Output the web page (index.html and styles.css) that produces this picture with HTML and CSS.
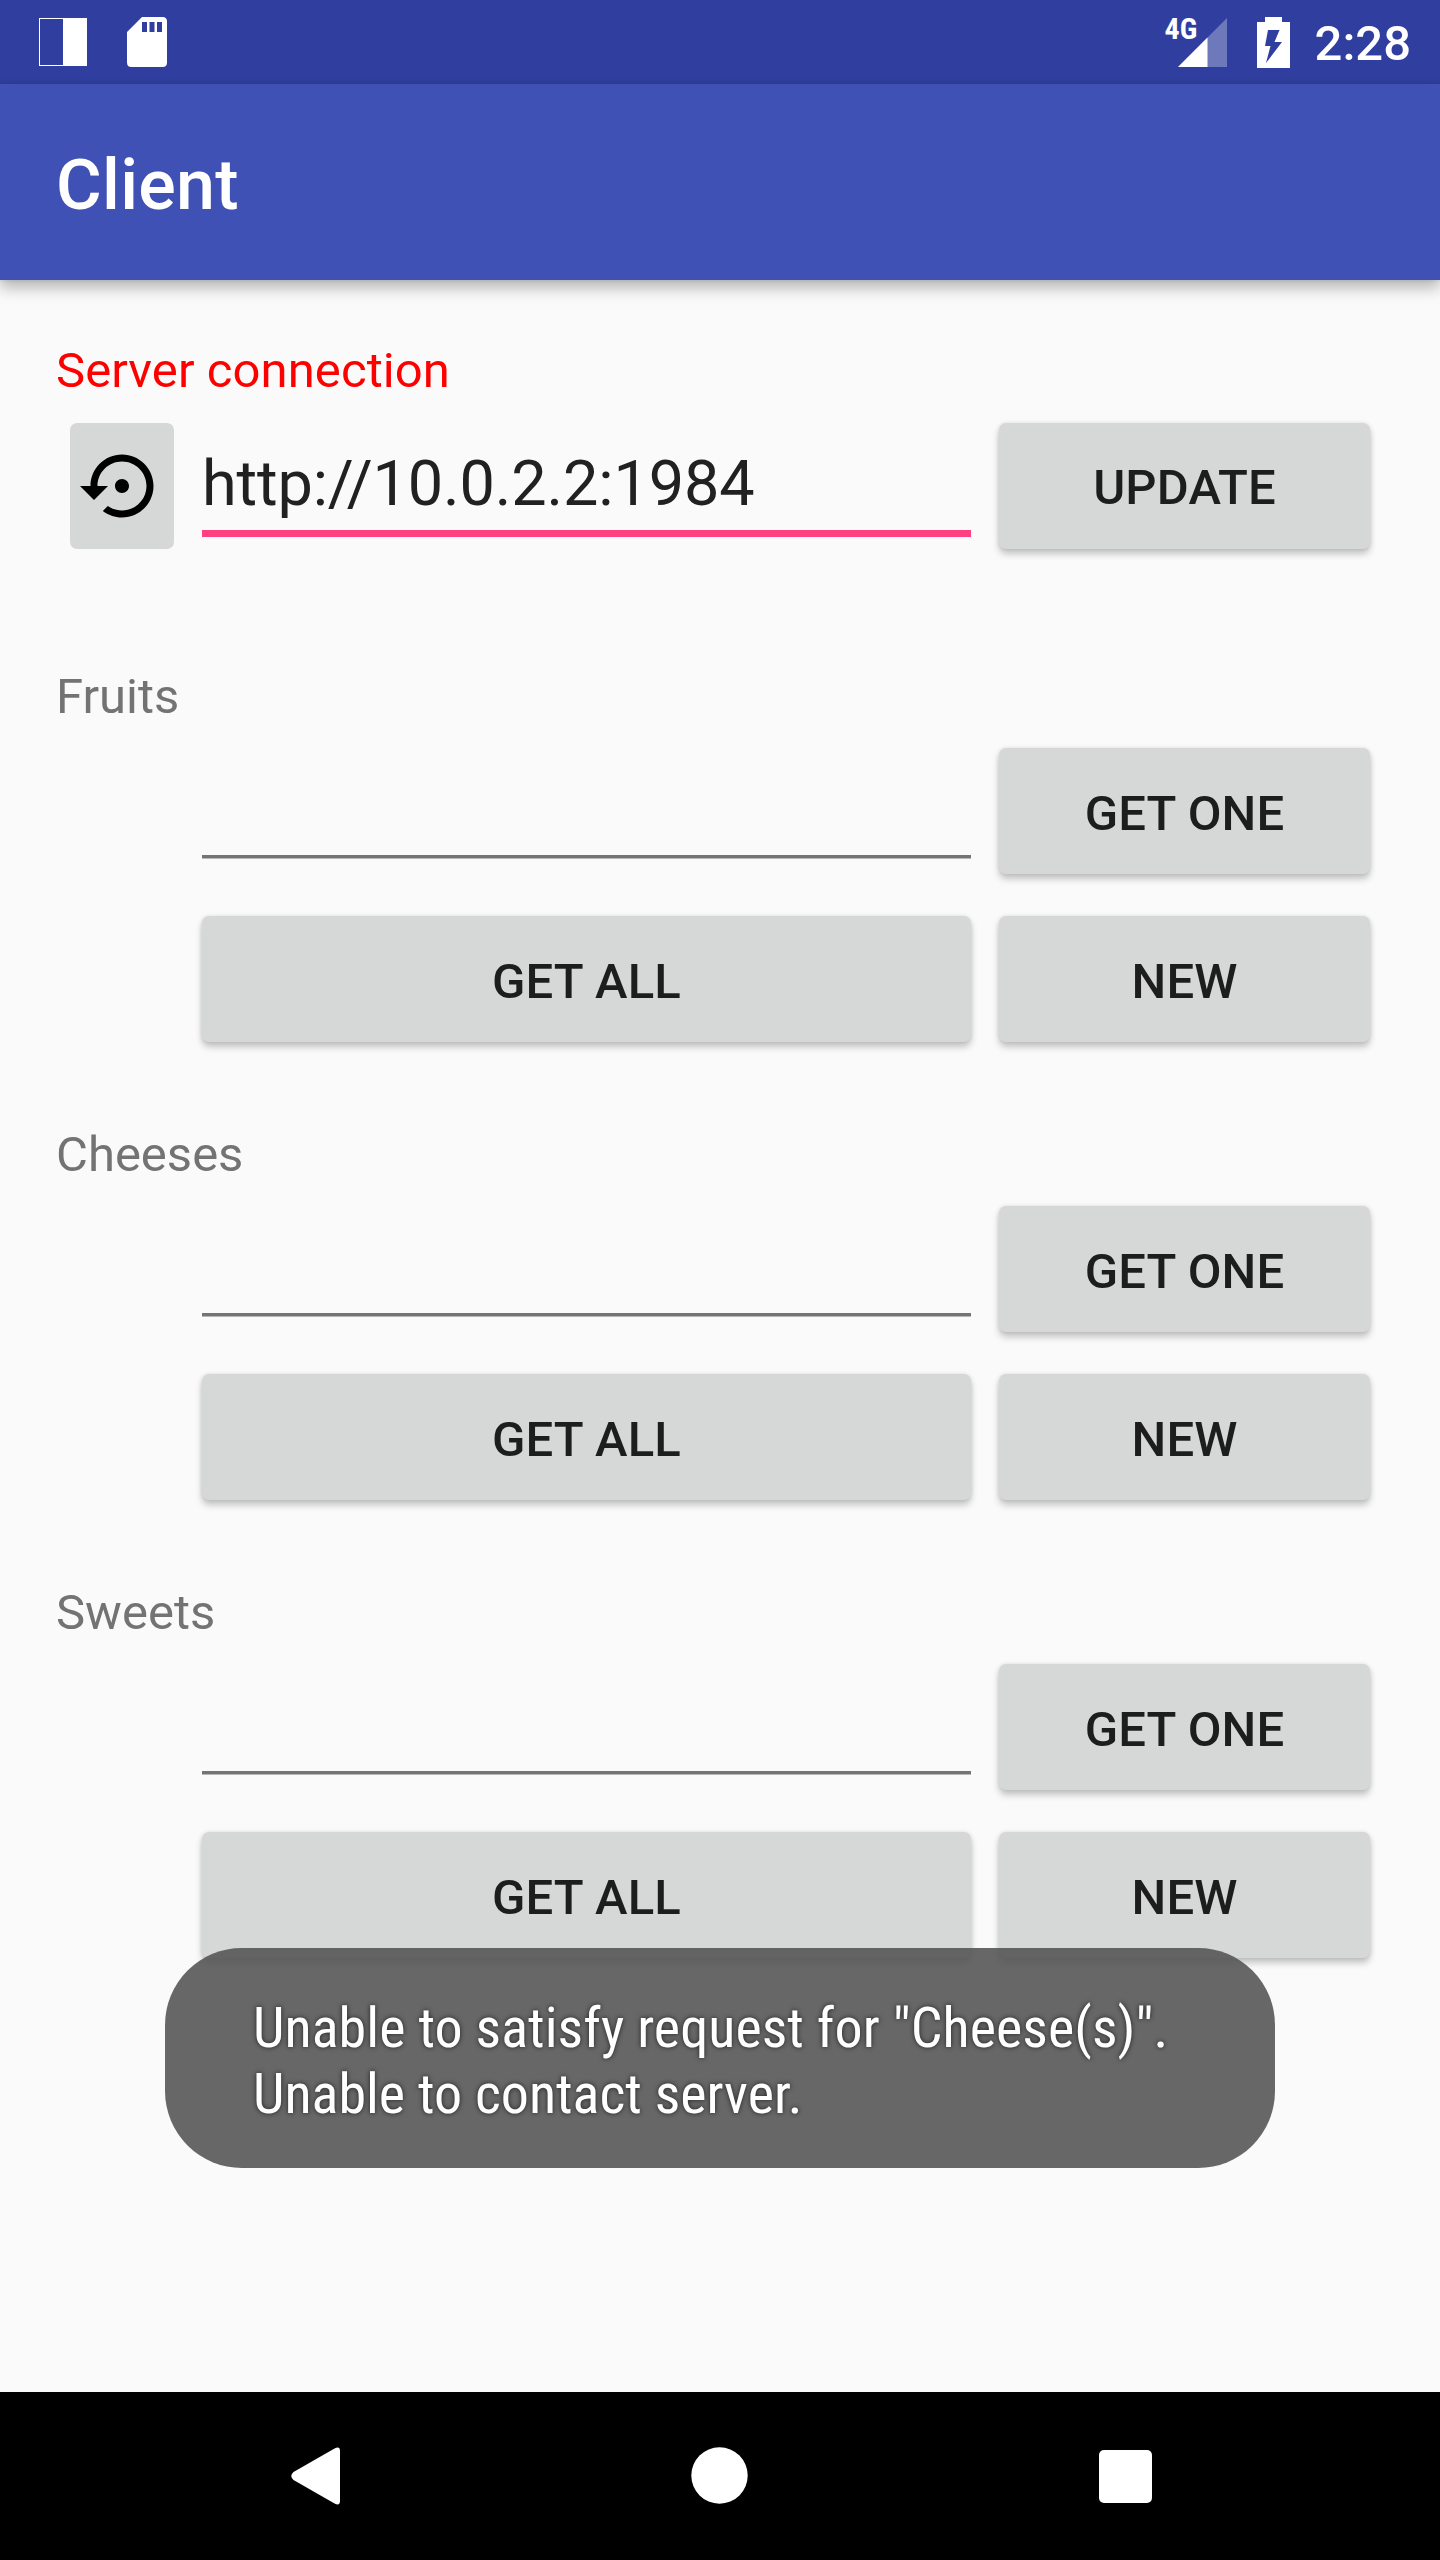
FILE: index.html
```html
<!DOCTYPE html>
<html lang="en">
<head>
<meta charset="utf-8">
<title>Client</title>
<link rel="stylesheet" href="styles.css">
</head>
<body>
<div class="screen">
  <header class="status-bar">
    <svg class="icon-contrast" width="48" height="48" viewBox="0 0 48 48"><rect x=".5" y=".5" width="47" height="47" fill="none" stroke="#fff"/><rect x="24" width="24" height="48" fill="#fff"/></svg>
    <svg class="icon-sd" width="40" height="50" viewBox="0 0 40 50"><path fill="#fff" fill-rule="evenodd" d="M15 0H35.500Q40 0 40 4.500V45.500Q40 50 35.500 50H4.500Q0 50 0 45.500V15ZM15 5V15H20V5ZM22.500 5V15H27.500V5ZM30 5V15H35V5Z"/></svg>
    <div class="status-right">
      <div class="signal">
        <svg width="49" height="49" viewBox="0 0 49 49"><path fill="#fff" fill-opacity=".3" d="M0 49L49 0V49Z"/><path fill="#fff" d="M0 49L29.500 19.500V49Z"/></svg>
        <span class="network">4G</span>
      </div>
      <svg class="icon-battery" width="33" height="51" viewBox="0 0 33 51"><path fill="#fff" fill-rule="evenodd" d="M8 0H25V5H33V51H0V5H8ZM11 13L8 29H13.500L9 46L25 25H17.500L22.500 13Z"/></svg>
      <span class="clock">2:28</span>
    </div>
  </header>
  <div class="app-bar"><h1 class="title">Client</h1></div>
  <main class="content">
    <section class="group group-server">
      <h2 class="label label-error">Server connection</h2>
      <div class="row">
        <button class="btn btn-flat" aria-label="Reset"><svg width="84" height="84" viewBox="0 0 24 24"><path d="M14 12c0-1.100-.9-2-2-2s-2 .9-2 2 .9 2 2 2 2-.9 2-2zm-2-9c-4.970 0-9 4.030-9 9H0l4 4 4-4H5c0-3.870 3.130-7 7-7s7 3.130 7 7-3.130 7-7 7c-1.510 0-2.910-.49-4.060-1.300l-1.420 1.440C8.040 20.300 9.940 21 12 21c4.970 0 9-4.030 9-9s-4.030-9-9-9z"/></svg></button>
        <div class="field field-focused">http://10.0.2.2:1984</div>
        <button class="btn">UPDATE</button>
      </div>
    </section>
    <section class="group">
      <h2 class="label">Fruits</h2>
      <div class="row"><div class="field"></div><button class="btn">GET ONE</button></div>
      <div class="row"><button class="btn btn-all">GET ALL</button><button class="btn">NEW</button></div>
    </section>
    <section class="group">
      <h2 class="label">Cheeses</h2>
      <div class="row"><div class="field"></div><button class="btn">GET ONE</button></div>
      <div class="row"><button class="btn btn-all">GET ALL</button><button class="btn">NEW</button></div>
    </section>
    <section class="group">
      <h2 class="label">Sweets</h2>
      <div class="row"><div class="field"></div><button class="btn">GET ONE</button></div>
      <div class="row"><button class="btn btn-all">GET ALL</button><button class="btn">NEW</button></div>
    </section>
  </main>
  <div class="toast"><p class="toast-text"><span class="toast-lead">Unable to satisfy request for "Cheese(s)".</span><br>Unable to contact server.</p></div>
  <nav class="nav-bar">
    <svg width="50" height="58" viewBox="0 0 50 58"><path fill="#fff" d="M2.500 25L44 1.200Q49 -1 49 4V54Q49 59 44 56.800L2.500 33Q-2 29 2.500 25Z"/></svg>
    <svg class="nav-home" width="57" height="57" viewBox="0 0 57 57"><circle cx="28.500" cy="28.500" r="28.200" fill="#fff"/></svg>
    <svg width="53" height="53" viewBox="0 0 53 53"><rect width="53" height="53" rx="5" fill="#fff"/></svg>
  </nav>
</div>
</body>
</html>
```
FILE: styles.css
```css
* { box-sizing: border-box; margin: 0; padding: 0; }

body {
  font-family: Roboto, "Noto Sans", sans-serif;
  background: #fafafa;
}

.screen {
  position: relative;
  display: flex;
  flex-direction: column;
  width: 1440px;
  height: 2560px;
  overflow: hidden;
}

.status-bar {
  display: flex;
  align-items: center;
  height: 84px;
  padding: 0 29px 0 39px;
  background: #303f9f;
  color: #fff;
}

.icon-sd { margin-left: 40px; }

.status-right {
  display: flex;
  align-items: center;
  margin-left: auto;
}

.signal { position: relative; height: 49px; }
.signal svg { display: block; }

.network {
  position: absolute;
  left: -13px;
  top: 0;
  font-size: 30px;
  line-height: 22px;
  font-weight: 700;
  font-stretch: 75%;
}

.icon-battery { margin-left: 30px; }

.clock {
  margin-left: 25px;
  padding-top: 3px;
  font-size: 49px;
  line-height: 57px;
  font-weight: 500;
}

.app-bar {
  position: relative;
  display: flex;
  align-items: center;
  height: 196px;
  padding-left: 56px;
  background: #3f51b5;
  color: #fff;
  box-shadow: 0 8px 14px rgba(0, 0, 0, .27), 0 0 4px rgba(0, 0, 0, .12);
}

.title {
  padding-top: 6px;
  font-size: 70px;
  line-height: 82px;
  font-weight: 500;
  letter-spacing: .3px;
}

.content {
  display: flex;
  flex: 1;
  flex-direction: column;
  gap: 63px;
  padding: 62px 69px 0 56px;
}

.group-server { margin-bottom: 36px; }
.group-server .row { padding-top: 1px; }

.label {
  height: 59px;
  color: #737373;
  font-size: 49px;
  line-height: 57px;
  font-weight: 400;
}

.label-error { color: #f00; letter-spacing: .08px; }

.row {
  display: grid;
  grid-template-columns: 118px 769px 371px;
  column-gap: 28px;
  align-items: center;
  height: 168px;
}

.btn {
  grid-column: 3;
  height: 126px;
  padding-top: 4px;
  border: 0;
  border-radius: 7px;
  background: #d6d8d7;
  box-shadow: 0 5px 7px rgba(0, 0, 0, .22), 0 0 4px rgba(0, 0, 0, .1);
  color: #1d1d1d;
  font: 500 49px/57px Roboto, "Noto Sans", sans-serif;
  letter-spacing: .15px;
}

.btn-all { grid-column: 2; }

.btn-flat {
  grid-column: 1;
  justify-self: end;
  width: 104px;
  padding: 0;
  box-shadow: none;
}

.btn-flat svg { display: block; margin: 0 10px; }

.field {
  grid-column: 2;
  align-self: start;
  height: 131px;
  border-bottom: 3px solid #747474;
  box-shadow: 0 1px #b7b7b7;
}

.field-focused {
  height: 135px;
  padding-top: 45px;
  border-bottom: 7px solid #ff4081;
  box-shadow: none;
  color: #212121;
  font-size: 63px;
  line-height: 74px;
  letter-spacing: -.15px;
}

.toast {
  position: absolute;
  left: 165px;
  top: 1948px;
  display: flex;
  align-items: center;
  width: 1110px;
  height: 220px;
  padding: 5px 0 0 88px;
  border-radius: 77px;
  background: rgba(82, 82, 82, .88);
}

.toast-text {
  color: #fff;
  font-size: 56px;
  line-height: 66px;
  font-stretch: 75%;
  white-space: nowrap;
  text-shadow: 0 0 5px rgba(0, 0, 0, .7);
}

.toast-lead { letter-spacing: .06px; }

.nav-bar {
  display: flex;
  align-items: center;
  justify-content: space-between;
  height: 168px;
  padding: 0 288px 0 291px;
  background: #000;
}

.nav-home { margin: 0 2px 2px 0; }
```
